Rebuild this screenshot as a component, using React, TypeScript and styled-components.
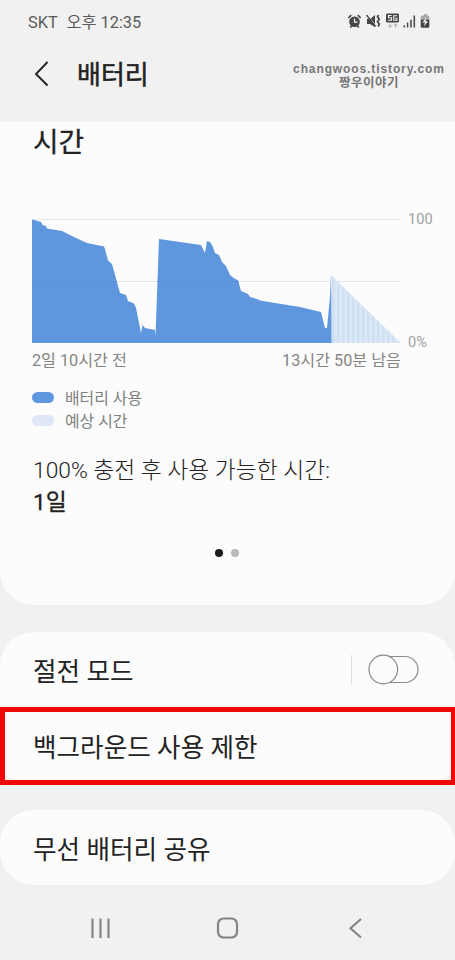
import React from "react";
import styled, { createGlobalStyle } from "styled-components";

const GlobalStyle = createGlobalStyle`
  * { box-sizing: border-box; }
  body { margin: 0; background: #f1f1f1; }
`;

const Screen = styled.div`
  width: 455px;
  height: 960px;
  overflow: hidden;
  display: flex;
  flex-direction: column;
  background: #f1f1f1;
  color: #222;
  font-family: Roboto, "Noto Sans CJK KR", sans-serif;
`;

const StatusBar = styled.div`
  height: 42px;
  flex: none;
  display: flex;
  align-items: center;
  justify-content: space-between;
  padding: 2px 24px 0 28px;
`;

const Carrier = styled.div`
  display: flex;
  gap: 9px;
  font-size: 16.3px;
  line-height: 24px;
  padding-top: 1px;
  color: #5a5a5a;
  white-space: nowrap;
`;

const StatusIcons = styled.svg`
  display: block;
  width: 84px;
  height: 18px;
`;

const Header = styled.header`
  height: 80px;
  flex: none;
  display: flex;
  align-items: flex-start;
  padding: 13px 9px 0 33px;
`;

const BackIcon = styled.svg`
  width: 18px;
  height: 28px;
  margin-top: 5px;
`;

const Title = styled.h1`
  margin: 1px 0 0 26px;
  font-size: 26px;
  line-height: 38px;
  font-weight: 400;
  -webkit-text-stroke: 0.5px #222;
  flex: 1;
`;

const Watermark = styled.div`
  margin-top: 8px;
  width: 154px;
  text-align: center;
  white-space: nowrap;
  font-family: "Liberation Sans", "Noto Sans CJK KR", sans-serif;
  font-weight: 700;
  color: #767676;
`;

const Site = styled.div`
  font-size: 12px;
  line-height: 13px;
  letter-spacing: 0.89px;
`;

const Author = styled.div`
  font-size: 12.5px;
  line-height: 14px;
  letter-spacing: 0.5px;
`;

const Card = styled.section<{ $h: number; $gap?: number; $radius?: string }>`
  height: ${(p) => p.$h}px;
  margin-top: ${(p) => p.$gap ?? 0}px;
  flex: none;
  background: #fcfcfc;
  border-radius: ${(p) => p.$radius ?? "34px"};
`;

const UsageCard = styled(Card)`
  display: flex;
  flex-direction: column;
  padding: 0 22px 0 32px;
`;

const SectionTitle = styled.h2`
  margin: 0;
  padding: 2px 0 0 1px;
  height: 96px;
  font-size: 27.8px;
  line-height: 38px;
  font-weight: 400;
  -webkit-text-stroke: 0.3px #222;
`;

const ChartRow = styled.div`
  display: flex;
  height: 125px;
`;

const Chart = styled.svg`
  display: block;
  width: 369px;
  height: 125px;
  flex: none;
`;

const Scale = styled.div`
  display: flex;
  flex-direction: column;
  justify-content: space-between;
  margin: -9px 0 -9px 7px;
  font-size: 14.6px;
  line-height: 20px;
  letter-spacing: 0.1px;
  color: #a0a0a0;
`;

const TimeAxis = styled.div`
  display: flex;
  justify-content: space-between;
  width: 369px;
  height: 30px;
  margin-top: 6px;
  font-size: 16.2px;
  line-height: 24px;
  color: #858585;
  white-space: nowrap;
`;

const Legend = styled.div`
  display: flex;
  flex-direction: column;
  margin-top: 7px;
`;

const LegendItem = styled.div`
  display: flex;
  align-items: center;
  gap: 11px;
  height: 23px;
  font-size: 15.9px;
  line-height: 23px;
  color: #808080;
`;

const LegendLabel = styled.span`
  padding-top: 2px;
`;

const Swatch = styled.span<{ $color: string }>`
  width: 22px;
  height: 11px;
  border-radius: 6px;
  background: ${(p) => p.$color};
`;

const Estimate = styled.div`
  margin: 23px 0 0 1px;
  font-size: 22.8px;
  line-height: 32px;
  font-weight: 300;
  white-space: nowrap;
`;

const EstimateValue = styled.div`
  font-weight: 400;
  -webkit-text-stroke: 0.3px #222;
`;

const Pager = styled.div`
  display: flex;
  justify-content: center;
  gap: 8px;
  margin: 30px 11px 0 0;
`;

const Dot = styled.span<{ $active?: boolean }>`
  width: 8px;
  height: 8px;
  border-radius: 50%;
  background: ${(p) => (p.$active ? "#1c1c1c" : "#b9b9b9")};
`;

const Row = styled.div<{ $highlight?: boolean }>`
  position: relative;
  display: flex;
  align-items: center;
  justify-content: space-between;
  height: 75px;
  padding: 0 36px 0 33px;
  font-size: 25.6px;
  line-height: 38px;
  white-space: nowrap;
  ${(p) =>
    p.$highlight &&
    `&::after {
      content: "";
      position: absolute;
      inset: 0 0 -3px;
      border: solid #ee0808;
      border-width: 5px 4px 5px 5px;
    }`}
`;

const RowLabel = styled.span<{ $drop?: number }>`
  padding-top: ${(p) => p.$drop ?? 5}px;
`;

const SwitchArea = styled.div`
  display: flex;
  align-items: center;
  gap: 16px;
`;

const Divider = styled.span`
  width: 1px;
  height: 29px;
  background: #dedede;
`;

const Toggle = styled.svg`
  width: 51px;
  height: 31px;
`;

const NavBar = styled.nav`
  flex: 1;
  display: flex;
  align-items: center;
  justify-content: space-between;
  padding: 11px 88px 0 89px;
`;

const NavIcon = styled.svg`
  width: 24px;
  height: 24px;
  fill: none;
  stroke: #858585;
  stroke-width: 2.2;
`;

const usage =
  "M0 1.5 L4 2.5 L9 4 L10.5 7 L14 8 L15 10.5 L30 13 L43 19.5 L55 25 L72 28.5 L73 31 L76 42.5 L80 46 L88 75 L94 77 L96 83 L102 85.5 L104 90 L109 115 L110.5 107 L113 110 L123 112 L123.5 118 L127 21 L169 27 L173 35 L175 23 L178 24 L181 29 L183 35 L187 37 L190 44 L194 48 L198 57 L203 61 L206 62 L209 73 L216 76 L218 79 L225 81 L228 82.5 L237 84 L268 89 L289 94 L293 110 L295 110 L298 79 L299 57 L299.5 125 L0 125 Z";

const StatusGlyphs = () => (
  <StatusIcons viewBox="0 0 84 18" fill="none" stroke="#444">
    <circle cx="7.5" cy="8.8" r="5.3" fill="#444" stroke="none" />
    <path d="M1.3 5 L4.2 2.2 M10.8 2.2 L13.7 5 M3.2 14.5 L4.8 12.9 M10.2 12.9 L11.8 14.5" strokeWidth="1.7" />
    <path d="M7.5 5.5 V9.2 H10.6" stroke="#f1f1f1" strokeWidth="1.3" />
    <path d="M20 6 H23 L28 2 V14 L23 11 H20 Z" fill="#444" stroke="none" />
    <path d="M20.5 2 L29 13" stroke="#f1f1f1" strokeWidth="1" />
    <path d="M19.5 2 L28.5 13.5" strokeWidth="1.3" />
    <path d="M31.5 2 L30.5 4 L32.3 6.3 L30.5 8.6 L32.3 11 L31 13.5" strokeWidth="1.7" />
    <rect x="39" y="0.5" width="13" height="9" rx="1.5" fill="#444" stroke="none" />
    <path d="M44.7 2.5 H41.5 V4.7 H44.5 V7.3 H41 M50.2 2.7 H46.7 V7.3 H50 V5.2 H48.3" stroke="#f1f1f1" strokeWidth="1.1" />
    <path d="M43 10.5 V14 M41.3 12.5 L43 14.5 L44.7 12.5 M48.5 14.5 V11.3 M46.8 12.6 L48.5 10.8 L50.2 12.6" stroke="#aaa" />
    <path d="M57.3 12.3 V14.5 M60.6 9.5 V14.5" strokeWidth="1.4" />
    <path d="M64 6.8 V14.5 M67.3 2.5 V14.5" strokeWidth="1.5" />
    <path d="M75.5 2.5 H77 V1 H80 V2.5 H81 Q82.3 2.5 82.3 4 V6.5 H73.7 V4 Q73.7 2.5 75 2.5 Z" fill="#aaa" stroke="none" />
    <path d="M73.7 6.5 H82.3 V13.5 Q82.3 14.7 81 14.7 H75 Q73.7 14.7 73.7 13.5 Z" fill="#444" stroke="none" />
    <path d="M79.5 4.5 L75.3 9.5 H78 L77 13.5 L81 8.3 H78.5 Z" fill="#f1f1f1" stroke="none" />
  </StatusIcons>
);

const BatteryChart = () => (
  <Chart viewBox="0 0 369 125">
    <defs>
      <pattern id="stripes" width="5" height="10" patternUnits="userSpaceOnUse">
        <rect width="5" height="10" fill="#dce8f7" />
        <rect width="2.5" height="10" fill="#cfe0f3" />
      </pattern>
    </defs>
    <path d="M0 1.5 H369 M0 63.5 H369" stroke="#e3e4e4" />
    <path d="M299 57 L369 125 H299 Z" fill="url(#stripes)" />
    <path d={usage} fill="#5f97df" />
    <path d="M0 63.5 H84.5 M125.5 63.5 H206.5" stroke="#5b91d7" />
  </Chart>
);

export default function App() {
  return (
    <>
      <GlobalStyle />
      <Screen>
        <StatusBar>
          <Carrier>
            <span>SKT</span>
            <span>오후 12:35</span>
          </Carrier>
          <StatusGlyphs />
        </StatusBar>
        <Header>
          <BackIcon viewBox="0 0 18 28" fill="none" stroke="#222" strokeWidth="1.9">
            <path d="M14.5 2 L3 14 L14.5 25.5" />
          </BackIcon>
          <Title>배터리</Title>
          <Watermark>
            <Site>changwoos.tistory.com</Site>
            <Author>짱우이야기</Author>
          </Watermark>
        </Header>

        <UsageCard $h={483} $radius="0 0 34px 34px">
          <SectionTitle>시간</SectionTitle>
          <ChartRow>
            <BatteryChart />
            <Scale>
              <span>100</span>
              <span>0%</span>
            </Scale>
          </ChartRow>
          <TimeAxis>
            <span>2일 10시간 전</span>
            <span>13시간 50분 남음</span>
          </TimeAxis>
          <Legend>
            <LegendItem>
              <Swatch $color="#5f97df" />
              <LegendLabel>배터리 사용</LegendLabel>
            </LegendItem>
            <LegendItem>
              <Swatch $color="#dee6f8" />
              <LegendLabel>예상 시간</LegendLabel>
            </LegendItem>
          </Legend>
          <Estimate>
            100% 충전 후 사용 가능한 시간:
            <EstimateValue>1일</EstimateValue>
          </Estimate>
          <Pager>
            <Dot $active />
            <Dot />
          </Pager>
        </UsageCard>

        <Card $h={148} $gap={27} $radius="34px 34px 18px 18px">
          <Row>
            <RowLabel>절전 모드</RowLabel>
            <SwitchArea>
              <Divider />
              <Toggle viewBox="0 0 51 31" fill="#fcfcfc" stroke="#8a8a8a" strokeWidth="1.2">
                <rect x="2" y="2.5" width="48" height="26" rx="13" />
                <circle cx="15.3" cy="15.5" r="14.3" />
              </Toggle>
            </SwitchArea>
          </Row>
          <Row $highlight>
            <RowLabel $drop={7}>백그라운드 사용 제한</RowLabel>
          </Row>
        </Card>

        <Card $h={75} $gap={30}>
          <Row>
            <RowLabel>무선 배터리 공유</RowLabel>
          </Row>
        </Card>

        <NavBar>
          <NavIcon viewBox="0 0 24 24">
            <path d="M3.5 2.5 V22 M11.5 2.5 V22 M19.5 2.5 V22" />
          </NavIcon>
          <NavIcon viewBox="0 0 24 24">
            <rect x="2" y="2.5" width="19" height="19" rx="5.5" />
          </NavIcon>
          <NavIcon viewBox="0 0 24 24">
            <path d="M18 3 L7.5 12.3 L18 21.5" />
          </NavIcon>
        </NavBar>
      </Screen>
    </>
  );
}
